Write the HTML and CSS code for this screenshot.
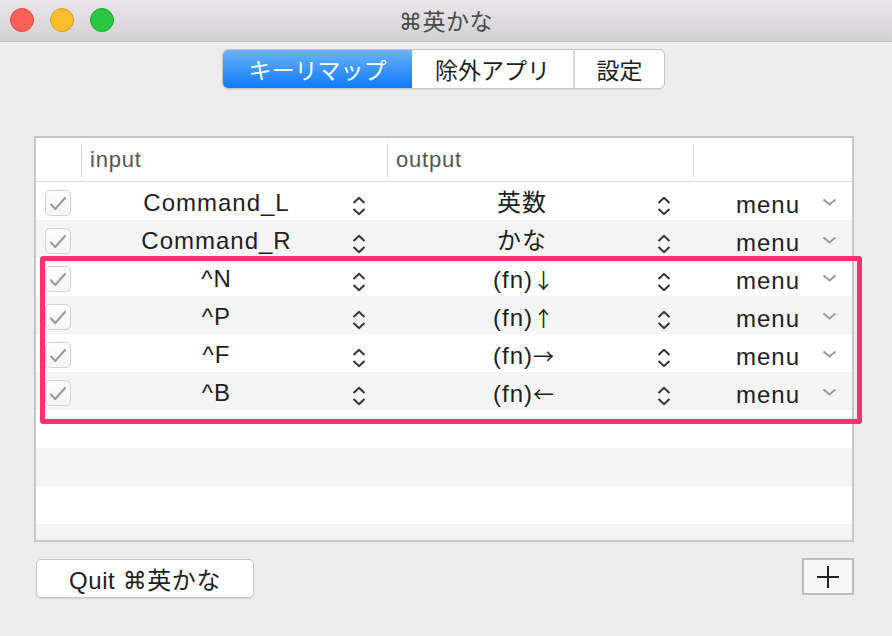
FILE: index.html
```html
<!DOCTYPE html>
<html lang="ja">
<head>
<meta charset="utf-8">
<title>⌘英かな</title>
<link rel="stylesheet" href="styles.css">
</head>
<body>
<div class="window">
  <header class="titlebar">
    <div class="lights">
      <span class="light red"></span>
      <span class="light yellow"></span>
      <span class="light green"></span>
    </div>
    <div class="title">⌘英かな</div>
    <div></div>
  </header>

  <main class="content">
    <nav class="segmented">
      <span class="seg seg-keymap active">キーリマップ</span>
      <span class="seg seg-exclude">除外アプリ</span>
      <span class="seg seg-settings">設定</span>
    </nav>

    <section class="table">
      <div class="thead">
        <div class="th th-check"></div>
        <div class="th">input</div>
        <div class="th">output</div>
        <div class="th"></div>
      </div>

      <div class="row">
        <div class="cell cell-check"><span class="checkbox"><svg width="26" height="26" viewBox="0 0 26 26"><path d="M6 14.5 L10.2 19 L20 8" fill="none" stroke="#9b9b9b" stroke-width="2.2" stroke-linecap="round" stroke-linejoin="round"/></svg></span></div>
        <div class="cell cell-pop"><span class="val">Command_L</span><svg class="updown" width="14" height="20" viewBox="0 0 14 20"><path d="M1.5 7 L7 1.8 L12.5 7 M1.5 13 L7 18.2 L12.5 13" fill="none" stroke="#333" stroke-width="2"/></svg></div>
        <div class="cell cell-pop out"><span class="val">英数</span><svg class="updown" width="14" height="20" viewBox="0 0 14 20"><path d="M1.5 7 L7 1.8 L12.5 7 M1.5 13 L7 18.2 L12.5 13" fill="none" stroke="#333" stroke-width="2"/></svg></div>
        <div class="cell cell-menu"><span class="menu">menu</span><svg class="down" width="15" height="8" viewBox="0 0 15 8"><path d="M1.5 1.5 L7.5 6.5 L13.5 1.5" fill="none" stroke="#999" stroke-width="2"/></svg></div>
      </div>

      <div class="row">
        <div class="cell cell-check"><span class="checkbox"><svg width="26" height="26" viewBox="0 0 26 26"><path d="M6 14.5 L10.2 19 L20 8" fill="none" stroke="#9b9b9b" stroke-width="2.2" stroke-linecap="round" stroke-linejoin="round"/></svg></span></div>
        <div class="cell cell-pop"><span class="val">Command_R</span><svg class="updown" width="14" height="20" viewBox="0 0 14 20"><path d="M1.5 7 L7 1.8 L12.5 7 M1.5 13 L7 18.2 L12.5 13" fill="none" stroke="#333" stroke-width="2"/></svg></div>
        <div class="cell cell-pop out"><span class="val">かな</span><svg class="updown" width="14" height="20" viewBox="0 0 14 20"><path d="M1.5 7 L7 1.8 L12.5 7 M1.5 13 L7 18.2 L12.5 13" fill="none" stroke="#333" stroke-width="2"/></svg></div>
        <div class="cell cell-menu"><span class="menu">menu</span><svg class="down" width="15" height="8" viewBox="0 0 15 8"><path d="M1.5 1.5 L7.5 6.5 L13.5 1.5" fill="none" stroke="#999" stroke-width="2"/></svg></div>
      </div>

      <div class="row">
        <div class="cell cell-check"><span class="checkbox"><svg width="26" height="26" viewBox="0 0 26 26"><path d="M6 14.5 L10.2 19 L20 8" fill="none" stroke="#9b9b9b" stroke-width="2.2" stroke-linecap="round" stroke-linejoin="round"/></svg></span></div>
        <div class="cell cell-pop"><span class="val">^N</span><svg class="updown" width="14" height="20" viewBox="0 0 14 20"><path d="M1.5 7 L7 1.8 L12.5 7 M1.5 13 L7 18.2 L12.5 13" fill="none" stroke="#333" stroke-width="2"/></svg></div>
        <div class="cell cell-pop out"><span class="val">(fn)<span class="arrow">↓</span></span><svg class="updown" width="14" height="20" viewBox="0 0 14 20"><path d="M1.5 7 L7 1.8 L12.5 7 M1.5 13 L7 18.2 L12.5 13" fill="none" stroke="#333" stroke-width="2"/></svg></div>
        <div class="cell cell-menu"><span class="menu">menu</span><svg class="down" width="15" height="8" viewBox="0 0 15 8"><path d="M1.5 1.5 L7.5 6.5 L13.5 1.5" fill="none" stroke="#999" stroke-width="2"/></svg></div>
      </div>

      <div class="row">
        <div class="cell cell-check"><span class="checkbox"><svg width="26" height="26" viewBox="0 0 26 26"><path d="M6 14.5 L10.2 19 L20 8" fill="none" stroke="#9b9b9b" stroke-width="2.2" stroke-linecap="round" stroke-linejoin="round"/></svg></span></div>
        <div class="cell cell-pop"><span class="val">^P</span><svg class="updown" width="14" height="20" viewBox="0 0 14 20"><path d="M1.5 7 L7 1.8 L12.5 7 M1.5 13 L7 18.2 L12.5 13" fill="none" stroke="#333" stroke-width="2"/></svg></div>
        <div class="cell cell-pop out"><span class="val">(fn)<span class="arrow">↑</span></span><svg class="updown" width="14" height="20" viewBox="0 0 14 20"><path d="M1.5 7 L7 1.8 L12.5 7 M1.5 13 L7 18.2 L12.5 13" fill="none" stroke="#333" stroke-width="2"/></svg></div>
        <div class="cell cell-menu"><span class="menu">menu</span><svg class="down" width="15" height="8" viewBox="0 0 15 8"><path d="M1.5 1.5 L7.5 6.5 L13.5 1.5" fill="none" stroke="#999" stroke-width="2"/></svg></div>
      </div>

      <div class="row">
        <div class="cell cell-check"><span class="checkbox"><svg width="26" height="26" viewBox="0 0 26 26"><path d="M6 14.5 L10.2 19 L20 8" fill="none" stroke="#9b9b9b" stroke-width="2.2" stroke-linecap="round" stroke-linejoin="round"/></svg></span></div>
        <div class="cell cell-pop"><span class="val">^F</span><svg class="updown" width="14" height="20" viewBox="0 0 14 20"><path d="M1.5 7 L7 1.8 L12.5 7 M1.5 13 L7 18.2 L12.5 13" fill="none" stroke="#333" stroke-width="2"/></svg></div>
        <div class="cell cell-pop out"><span class="val">(fn)<span class="arrow">→</span></span><svg class="updown" width="14" height="20" viewBox="0 0 14 20"><path d="M1.5 7 L7 1.8 L12.5 7 M1.5 13 L7 18.2 L12.5 13" fill="none" stroke="#333" stroke-width="2"/></svg></div>
        <div class="cell cell-menu"><span class="menu">menu</span><svg class="down" width="15" height="8" viewBox="0 0 15 8"><path d="M1.5 1.5 L7.5 6.5 L13.5 1.5" fill="none" stroke="#999" stroke-width="2"/></svg></div>
      </div>

      <div class="row">
        <div class="cell cell-check"><span class="checkbox"><svg width="26" height="26" viewBox="0 0 26 26"><path d="M6 14.5 L10.2 19 L20 8" fill="none" stroke="#9b9b9b" stroke-width="2.2" stroke-linecap="round" stroke-linejoin="round"/></svg></span></div>
        <div class="cell cell-pop"><span class="val">^B</span><svg class="updown" width="14" height="20" viewBox="0 0 14 20"><path d="M1.5 7 L7 1.8 L12.5 7 M1.5 13 L7 18.2 L12.5 13" fill="none" stroke="#333" stroke-width="2"/></svg></div>
        <div class="cell cell-pop out"><span class="val">(fn)<span class="arrow">←</span></span><svg class="updown" width="14" height="20" viewBox="0 0 14 20"><path d="M1.5 7 L7 1.8 L12.5 7 M1.5 13 L7 18.2 L12.5 13" fill="none" stroke="#333" stroke-width="2"/></svg></div>
        <div class="cell cell-menu"><span class="menu">menu</span><svg class="down" width="15" height="8" viewBox="0 0 15 8"><path d="M1.5 1.5 L7.5 6.5 L13.5 1.5" fill="none" stroke="#999" stroke-width="2"/></svg></div>
      </div>

      <div class="row empty"></div>
      <div class="row empty"></div>
      <div class="row empty"></div>
      <div class="row empty"></div>
    </section>

    <footer class="footer">
      <button class="quit">Quit ⌘英かな</button>
      <button class="add"><svg width="22" height="22" viewBox="0 0 22 22"><path d="M0 11 H22 M11 0 V22" stroke="#222" stroke-width="2"/></svg></button>
    </footer>
  </main>

  <div class="highlight"></div>
</div>
</body>
</html>
```

FILE: styles.css
```css
* { box-sizing: border-box; }

html, body {
  margin: 0;
  padding: 0;
}

body {
  width: 892px;
  height: 636px;
  overflow: hidden;
  background: #ececec;
  font-family: "Liberation Sans", "DejaVu Sans", "Noto Sans CJK JP", sans-serif;
  color: #222;
}

.window {
  position: relative;
  width: 892px;
  height: 636px;
  display: flex;
  flex-direction: column;
}

/* Title bar */
.titlebar {
  height: 42px;
  flex: none;
  display: grid;
  grid-template-columns: 1fr auto 1fr;
  align-items: center;
  background: linear-gradient(#e9e7e9, #d3d1d3);
  border-bottom: 1px solid #bcbabc;
}

.lights {
  display: flex;
  gap: 16px;
  padding-left: 10px;
  padding-bottom: 2px;
}

.light {
  width: 24px;
  height: 24px;
  border-radius: 50%;
  display: block;
}
.light.red { background: #fe5f57; border: 1px solid #e2463f; }
.light.yellow { background: #febc2e; border: 1px solid #dfa023; }
.light.green { background: #28c840; border: 1px solid #1cac2b; }

.title {
  font-family: "DejaVu Sans", "Noto Sans CJK JP", sans-serif;
  font-size: 23px;
  color: #4a4a4a;
  padding-bottom: 2px;
  letter-spacing: 0.5px;
}

/* Content */
.content {
  flex: 1;
  display: flex;
  flex-direction: column;
}

.segmented {
  align-self: flex-start;
  margin: 7px 0 0 222px;
  display: flex;
  height: 40px;
  border: 1px solid #c6c6c6;
  border-radius: 6px;
  background: #fff;
  overflow: hidden;
  box-shadow: 0 1px 1px rgba(0, 0, 0, 0.08);
}

.seg {
  display: flex;
  align-items: center;
  justify-content: center;
  font-family: "Noto Sans CJK JP", sans-serif;
  font-size: 23px;
  color: #1e1e1e;
  line-height: 1;
}

.seg-keymap { width: 189px; }
.seg-exclude { width: 163px; border-right: 2px solid #d8d8d8; }
.seg-settings { width: 89px; }

.seg.active {
  color: #fff;
  background: linear-gradient(#6ab2fa, #0f7bfd);
}

/* Table */
.table {
  margin: 47px 0 0 34px;
  width: 820px;
  height: 406px;
  border: 2px solid #c6c6c6;
  background: #fff;
  overflow: hidden;
}

.thead,
.row {
  display: grid;
  grid-template-columns: 45px 306px 306px 1fr;
}

.thead {
  height: 44px;
  align-items: center;
  border-bottom: 1px solid #dcdcdc;
}

.th {
  height: 34px;
  line-height: 34px;
  padding-left: 8px;
  border-left: 1px solid #dcdcdc;
  font-size: 22px;
  letter-spacing: 0.8px;
  color: #555;
}

.th-check { border-left: none; }

.row {
  height: 38px;
  background: #fff;
}

.row:nth-of-type(odd) { background: #f4f4f4; }

.cell {
  display: flex;
  align-items: center;
  font-size: 24px;
  letter-spacing: 1px;
  color: #1e1e1e;
  line-height: 38px;
}

.cell-check {
  justify-content: center;
}

.checkbox {
  width: 26px;
  height: 26px;
  border: 1px solid #d2d2d2;
  border-radius: 5px;
  background: linear-gradient(#fdfdfd, #f5f5f5);
  display: block;
  position: relative;
  margin-left: -1px;
}

.checkbox svg {
  position: absolute;
  left: -1px;
  top: -1px;
}

.cell-pop {
  padding-right: 21px;
}

.cell-pop.out { padding-right: 22px; }

.val {
  flex: 1;
  text-align: center;
  white-space: nowrap;
}

.arrow {
  font-family: "Noto Sans CJK JP", sans-serif;
  font-size: 21px;
  letter-spacing: 0;
  color: #1e1e1e;
  margin-left: 0;
  margin-right: -3px;
}

.updown {
  flex: none;
  margin-top: 5px;
}

.cell-menu {
  padding-left: 43px;
}

.menu {
  margin-top: 4px;
  width: 65px;
}

.down {
  margin-left: 21px;
  margin-top: -2px;
}

/* Footer */
.footer {
  display: flex;
  justify-content: space-between;
  align-items: flex-start;
  padding: 16px 38px 0 36px;
}

.quit {
  margin-top: 1px;
  width: 218px;
  height: 39px;
  border: 1px solid #c9c9c9;
  border-radius: 5px;
  background: #fff;
  box-shadow: 0 1px 1px rgba(0, 0, 0, 0.12);
  font-family: "Liberation Sans", "DejaVu Sans", "Noto Sans CJK JP", sans-serif;
  font-size: 24px;
  color: #1e1e1e;
  padding: 0;
  letter-spacing: 0.6px;
}

.add {
  width: 52px;
  height: 37px;
  border: 2px solid #bcbcbc;
  background: #f6f6f6;
  padding: 0;
  display: flex;
  align-items: center;
  justify-content: center;
}

/* Annotation overlay */
.highlight {
  position: absolute;
  left: 40px;
  top: 256px;
  width: 822px;
  height: 168px;
  border: 5px solid #ff3070;
  border-radius: 3px;
  pointer-events: none;
}
```
